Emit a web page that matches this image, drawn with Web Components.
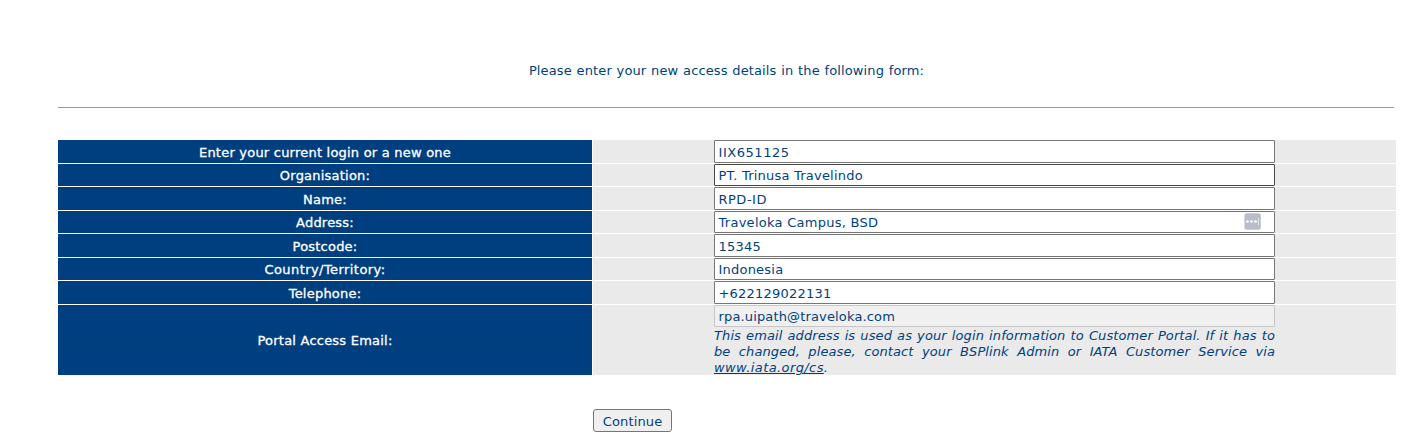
<!DOCTYPE html>
<html lang="en">
<head>
<meta charset="utf-8">
<title>Access details</title>
<style>
body { margin: 0; background: #fff; font: 13px/16px "DejaVu Sans", Verdana, sans-serif; color: #003f7f; }
</style>
</head>
<body>
<access-page></access-page>
<script>
class AccessPage extends HTMLElement {
  constructor() {
    super();
    this.attachShadow({ mode: 'open' }).innerHTML = `
<style>
:host { display: block; box-sizing: border-box; height: 448px; padding: 62px 31px 0 58px; }
.intro { margin: 0; text-align: center; height: 45px; line-height: 17px; letter-spacing: .12px; word-spacing: .5px; }
.rule { height: 1px; width: 1336px; background: #999; margin-bottom: 32px; }
.form { display: grid; grid-template-rows: 23px 22px 23px 22px 23px 22px 23px 70px; row-gap: 1px; }
.actions { margin: 34px 0 0 535px; display: flex; }
a { color: inherit; letter-spacing: .4px; }
</style>
<p class="intro"><span>Please enter your new access details in the following form:</span></p>
<div class="rule"></div>
<div class="form">
<form-row label="Enter your current login or a new one" value="IIX651125" tall style="--track:.55px"></form-row>
<form-row label="Organisation:" value="PT. Trinusa Travelindo" hovered></form-row>
<form-row label="Name:" value="RPD-ID" tall style="--track:.5px"></form-row>
<form-row label="Address:" value="Traveloka Campus, BSD" style="--track:.27px"><autofill-badge slot="badge"></autofill-badge></form-row>
<form-row label="Postcode:" value="15345" tall></form-row>
<form-row label="Country/Territory:" value="Indonesia" style="--label-track:.43px"></form-row>
<form-row label="Telephone:" value="+622129022131" tall></form-row>
<form-row label="Portal Access Email:" value="rpa.uipath@traveloka.com" locked style="--track:.15px"><i>This email address is used as your login information to Customer Portal. If it has to be changed, please, contact your BSPlink Admin or IATA Customer Service via <a href="#">www.iata.org/cs</a>.</i></form-row>
</div>
<div class="actions"><push-button>Continue</push-button></div>`;
  }
}

class FormRow extends HTMLElement {
  connectedCallback() {
    if (this.shadowRoot) return;
    this.attachShadow({ mode: 'open' }).innerHTML = `
<style>
:host { display: grid; grid-template-columns: 534px 803px; grid-template-rows: minmax(0, 1fr); column-gap: 1px; min-height: 0; }
.label { background: #003f7f; color: #fff; display: flex; align-items: center; justify-content: center; -webkit-text-stroke: .3px #fff; letter-spacing: var(--label-track, .22px); padding-top: 1px; }
:host([tall]) .label { padding-top: 2px; }
.cell { background: #eaeaea; padding: 0 121px; display: flex; flex-direction: column; min-height: 0; }
.field { position: relative; box-sizing: border-box; flex: 1; border: 1px solid #767676; border-radius: 1px; background: #fff; padding: 1px 3.5px 0; display: flex; align-items: center; letter-spacing: var(--track, .22px); white-space: nowrap; }
:host([tall]) .field { padding-top: 2px; }
:host([hovered]) .field { border-color: #484848; }
:host([locked]) .field { flex: 0 0 22px; background: #f0f0f0; border-color: #c6c6c6; }
.note { display: none; text-align: justify; line-height: 16px; letter-spacing: .1px; padding-top: 1px; }
:host([locked]) .note { display: block; }
::slotted([slot=badge]) { position: absolute; right: 13px; top: 1px; }
</style>
<div class="label"><span class="t"></span></div>
<div class="cell"><div class="field"><span class="v"></span><slot name="badge"></slot></div><div class="note"><slot></slot></div></div>`;
    this.shadowRoot.querySelector('.t').textContent = this.getAttribute('label');
    this.shadowRoot.querySelector('.v').textContent = this.getAttribute('value');
  }
}

class AutofillBadge extends HTMLElement {
  constructor() {
    super();
    this.attachShadow({ mode: 'open' }).innerHTML = `
<style>:host { display: block; width: 17px; height: 17px; } svg { display: block; }</style>
<svg width="17" height="17" viewBox="0 0 17 17"><rect x=".4" y=".3" width="16.4" height="16.4" rx="2.5" fill="#b7bdc9"/><g fill="#fff"><circle cx="3.5" cy="8.5" r="1.35"/><circle cx="7.5" cy="8.5" r="1.35"/><circle cx="11.5" cy="8.5" r="1.35"/></g><path d="M14.5 5v7" stroke="#e4e7ec" stroke-width="1"/></svg>`;
  }
}

class PushButton extends HTMLElement {
  constructor() {
    super();
    this.attachShadow({ mode: 'open' }).innerHTML = `
<style>
:host { display: block; }
button { box-sizing: border-box; display: block; width: 79px; height: 23px; margin: 0; padding: 2px 0 0; border: 1px solid #767676; border-radius: 3px; background: #efefef; color: inherit; font: inherit; letter-spacing: .15px; white-space: nowrap; }
</style>
<button type="button"><slot></slot></button>`;
  }
}

customElements.define('autofill-badge', AutofillBadge);
customElements.define('push-button', PushButton);
customElements.define('form-row', FormRow);
customElements.define('access-page', AccessPage);
</script>
</body>
</html>
